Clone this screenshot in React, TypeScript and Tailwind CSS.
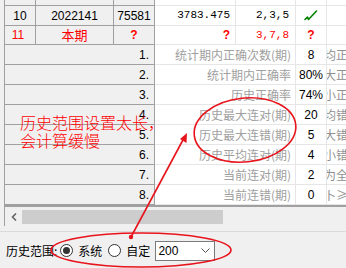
import React from 'react'

const cjk = { fontFamily: '"Noto Sans CJK SC", "Liberation Sans", sans-serif' }
const sans = { fontFamily: '"Liberation Sans", "Noto Sans CJK SC", sans-serif' }
const mono = { fontFamily: '"Liberation Mono", "Noto Sans CJK SC", monospace' }

const stats = [
    { n: '1.', label: '统计期内正确次数(期)', value: '8', note: '均正' },
    { n: '2.', label: '统计期内正确率', value: '80%', note: '大正' },
    { n: '3.', label: '历史正确率', value: '74%', note: '小正' },
    { n: '4.', label: '历史最大连对(期)', value: '20', note: '均错' },
    { n: '5.', label: '历史最大连错(期)', value: '5', note: '大错' },
    { n: '6.', label: '历史平均连对(期)', value: '4', note: '小错' },
    { n: '7.', label: '当前连对(期)', value: '2', note: '为全' },
    { n: '8.', label: '当前连错(期)', value: '0', note: '卜≥5' },
]

const Check = () => (
    <svg width="14" height="11" viewBox="0 0 14 11" fill="none">
        <path d="M1 9.5 L3.5 7 L4.5 9.5 L12.5 1" stroke="#008000" strokeWidth="1.6" strokeLinejoin="round" strokeLinecap="round" />
    </svg>
)

function TopRow({ h, cells }: { h: string, cells?: React.ReactNode[] }) {
    const c = cells ?? []
    return (
        <div className={`flex ${h} text-[12px]`}>
            <div className="w-[31px] flex-none flex items-center justify-center bg-[#f0f0f0] border-r border-b border-[#a0a0a0]">{c[0]}</div>
            <div className="w-[78px] flex-none flex items-center justify-center bg-[#f0f0f0] border-r border-b border-[#a0a0a0]">{c[1]}</div>
            <div className="w-[41px] flex-none flex items-center justify-center bg-[#f0f0f0] border-r border-b border-[#a0a0a0]">{c[2]}</div>
            <div className="w-[81px] flex-none flex items-center justify-end pr-[5px] bg-white border-r border-b border-[#e6e6e6]">{c[3]}</div>
            <div className="w-[60px] flex-none flex items-center justify-end pr-[6px] bg-white border-r border-b border-[#e6e6e6]">{c[4]}</div>
            <div className="w-[31px] flex-none flex items-center justify-center bg-white border-r border-b border-[#e6e6e6]">{c[5]}</div>
            <div className="flex-1 bg-white border-b border-[#e6e6e6]" />
        </div>
    )
}

export default function App() {
    return (
        <div className="relative w-[346px] h-[268px] overflow-hidden bg-[#f0f0f0] select-none">
            <div className="pl-[4px]">
                <div className="border-l border-[#a0a0a0]">
                    <TopRow h="h-[6px]" />
                    <TopRow h="h-[20px]" cells={[
                        <span style={sans}>10</span>,
                        <span style={sans}>2022141</span>,
                        <span style={sans}>75581</span>,
                        <span style={mono} className="text-[11px]">3783.475</span>,
                        <span style={mono} className="text-[11px]">2,3,5</span>,
                        <Check />,
                    ]} />
                    <TopRow h="h-[19px]" cells={[
                        <span style={sans} className="text-[#ff0000] -ml-[4px]">11</span>,
                        <span style={cjk} className="text-[#ff0000] text-[13px]">本期</span>,
                        <span style={sans} className="text-[#ff0000] font-bold">?</span>,
                        <span style={sans} className="text-[#ff0000] font-bold">?</span>,
                        <span style={mono} className="text-[#ff0000] text-[11px]">3,7,8</span>,
                        <span style={sans} className="text-[#ff0000] font-bold">?</span>,
                    ]} />
                    {stats.map(s => (
                        <div key={s.n} className="flex h-[20px] text-[12px]">
                            <div style={sans} className="w-[150px] flex-none flex items-center justify-end pr-[5px] bg-[#f0f0f0] border-r border-b border-[#a0a0a0]">{s.n}</div>
                            <div style={cjk} className="w-[141px] flex-none flex items-center justify-end pr-[4px] bg-white text-[#a0a0a0] border-r border-b border-[#e6e6e6] whitespace-nowrap">{s.label}</div>
                            <div style={sans} className="w-[31px] flex-none flex items-center justify-center bg-white border-r border-b border-[#e6e6e6]">{s.value}</div>
                            <div style={cjk} className="flex-1 flex items-center overflow-hidden bg-white text-[#909090] border-b border-[#e6e6e6] whitespace-nowrap">
                                <span className="-ml-[3px]">{s.note}</span>
                            </div>
                        </div>
                    ))}
                    <div className="h-[2px] bg-[#a0a0a0]" />
                    <div className="flex items-center h-[19px] bg-[#f0f0f0]">
                        <div className="w-[17px] flex-none flex items-center justify-center">
                            <svg width="6" height="8" viewBox="0 0 6 8"><path d="M5 0.5 L1.5 4 L5 7.5" stroke="#606060" strokeWidth="1.5" fill="none" /></svg>
                        </div>
                        <div className="w-[201px] h-[14px] bg-[#cdcdcd]" />
                    </div>
                </div>
            </div>
            <div className="h-[5px]" />
            <div className="h-[1px] bg-[#dadada]" />
            <div style={cjk} className="flex items-center h-[37px] pl-[6px] text-[12px] text-black">
                <span>历史范围:</span>
                <span className="ml-[3px] w-[13px] h-[13px] rounded-full border border-[#333] flex items-center justify-center bg-white">
                    <span className="w-[7px] h-[7px] rounded-full bg-[#333]" />
                </span>
                <span className="ml-[5px]">系统</span>
                <span className="ml-[6px] w-[13px] h-[13px] rounded-full border border-[#333] bg-white" />
                <span className="ml-[5px]">自定</span>
                <div className="ml-[5px] w-[60px] h-[20px] border border-[#7a7a7a] bg-white flex items-center pl-[2px] pr-[4px]">
                    <span style={sans} className="flex-1">200</span>
                    <svg width="9" height="5" viewBox="0 0 9 5"><path d="M0.5 0.5 L4.5 4.5 L8.5 0.5" stroke="#505050" strokeWidth="1" fill="none" /></svg>
                </div>
            </div>

            <div style={cjk} className="absolute left-[20px] top-[113px] text-[16px] leading-[18px] text-[#ff0000] font-light pointer-events-none">
                <div>历史范围设置太长，</div>
                <div>会计算缓慢</div>
            </div>
            <svg className="absolute inset-0 pointer-events-none" width="346" height="268" viewBox="0 0 346 268">
                <ellipse cx="245" cy="130" rx="51" ry="32" transform="rotate(-6 245 130)" fill="none" stroke="#e8141c" strokeWidth="1.6" />
                <ellipse cx="141" cy="250" rx="90" ry="17" fill="none" stroke="#e8141c" strokeWidth="1.6" />
                <line x1="131" y1="237" x2="184" y2="138" stroke="#e8141c" strokeWidth="1.6" />
                <path d="M187 133 L186.5 143 L180 139 Z" fill="#e8141c" />
                <circle cx="131" cy="237" r="2.2" fill="#e8141c" />
            </svg>
        </div>
    )
}
